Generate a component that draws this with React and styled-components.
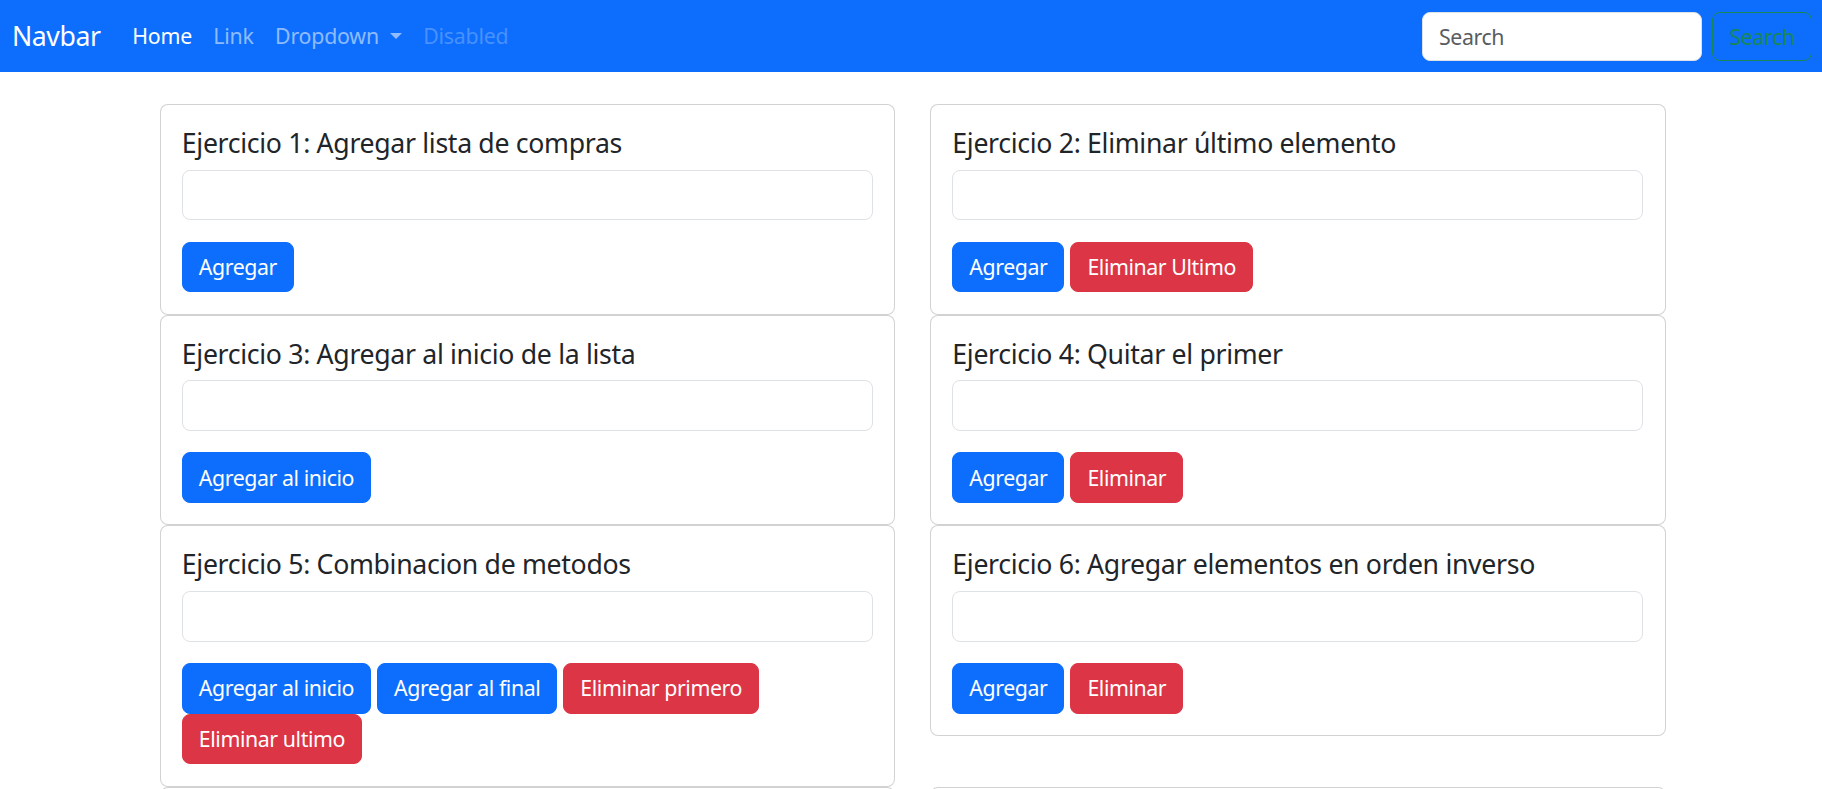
import React from 'react';
import styled, { createGlobalStyle, css } from 'styled-components';

const GlobalStyle = createGlobalStyle`
  html, body {
    margin: 0;
    padding: 0;
    background: #fff;
  }
  body {
    font-family: 'Noto Sans', 'Open Sans', sans-serif;
    font-size: 21.33px;
    line-height: 1.5;
    letter-spacing: -0.02em;
    color: #212529;
  }
  *, *::before, *::after {
    box-sizing: border-box;
  }
`;

const exercises = [
  {
    title: 'Ejercicio 1: Agregar lista de compras',
    buttons: [{ label: 'Agregar', variant: 'primary' }],
  },
  {
    title: 'Ejercicio 2: Eliminar último elemento',
    buttons: [
      { label: 'Agregar', variant: 'primary' },
      { label: 'Eliminar Ultimo', variant: 'danger' },
    ],
  },
  {
    title: 'Ejercicio 3: Agregar al inicio de la lista',
    buttons: [{ label: 'Agregar al inicio', variant: 'primary' }],
  },
  {
    title: 'Ejercicio 4: Quitar el primer',
    buttons: [
      { label: 'Agregar', variant: 'primary' },
      { label: 'Eliminar', variant: 'danger' },
    ],
  },
  {
    title: 'Ejercicio 5: Combinacion de metodos',
    buttons: [
      { label: 'Agregar al inicio', variant: 'primary' },
      { label: 'Agregar al final', variant: 'primary' },
      { label: 'Eliminar primero', variant: 'danger' },
      { label: 'Eliminar ultimo', variant: 'danger' },
    ],
  },
  {
    title: 'Ejercicio 6: Agregar elementos en orden inverso',
    buttons: [
      { label: 'Agregar', variant: 'primary' },
      { label: 'Eliminar', variant: 'danger' },
    ],
  },
  {
    title: 'Ejercicio 7: Buscar elemento',
    buttons: [{ label: 'Buscar', variant: 'primary' }],
  },
  {
    title: 'Ejercicio 8: Ordenar lista',
    buttons: [{ label: 'Ordenar', variant: 'primary' }],
  },
];

const App = () => {
  return (
    <>
      <GlobalStyle />
      <Navbar>
        <Brand href="#">Navbar</Brand>
        <NavList>
          <li>
            <NavLink href="#" $state="active">Home</NavLink>
          </li>
          <li>
            <NavLink href="#">Link</NavLink>
          </li>
          <li>
            <NavLink href="#">
              Dropdown
              <Caret />
            </NavLink>
          </li>
          <li>
            <NavLink $state="disabled">Disabled</NavLink>
          </li>
        </NavList>

        <SearchForm onSubmit={e => e.preventDefault()}>
          <SearchInput type="search" placeholder="Search" aria-label="Search" />
          <SearchButton type="submit">Search</SearchButton>
        </SearchForm>
      </Navbar>

      <Main>
        {exercises.map(ex => (
          <Card key={ex.title}>
            <CardTitle>{ex.title}</CardTitle>
            <TextInput type="text" />
            <ButtonRow>
              {ex.buttons.map(btn => (
                <Button key={btn.label} $variant={btn.variant}>
                  {btn.label}
                </Button>
              ))}
            </ButtonRow>
          </Card>
        ))}
      </Main>
    </>
  );
};

const Navbar = styled.nav`
  display: flex;
  align-items: center;
  height: 72px;
  padding: 0 10px 0 12px;
  background-color: #0d6efd;
`;

const Brand = styled.a`
  margin-right: 21px;
  font-size: 26.67px;
  line-height: 1.5;
  color: #fff;
  text-decoration: none;
`;

const NavList = styled.ul`
  display: flex;
  margin: 0;
  padding: 0;
  list-style: none;
`;

const linkColors = {
  active: '#fff',
  default: 'rgba(255, 255, 255, 0.55)',
  disabled: 'rgba(255, 255, 255, 0.25)',
};

const NavLink = styled.a`
  display: block;
  padding: 10.67px;
  font-size: 21.33px;
  letter-spacing: -0.01em;
  color: ${p => linkColors[p.$state || 'default']};
  text-decoration: none;
  cursor: ${p => (p.$state === 'disabled' ? 'default' : 'pointer')};
`;

const Caret = styled.span`
  display: inline-block;
  margin-left: 11px;
  vertical-align: 5.44px;
  border-top: 6.4px solid;
  border-right: 6.4px solid transparent;
  border-left: 6.4px solid transparent;
  border-bottom: 0;
`;

const SearchForm = styled.form`
  display: flex;
  gap: 10px;
  margin-left: auto;
`;

const controlBase = css`
  height: 49px;
  padding: 8px 16px;
  font-family: inherit;
  font-size: 21.33px;
  line-height: 1.5;
  letter-spacing: inherit;
  border-radius: 8px;
`;

const SearchInput = styled.input`
  ${controlBase};
  width: 280px;
  border: 1px solid #dee2e6;
  background: #fff;
  color: #212529;
  outline: none;

  &::placeholder {
    color: #595c5f;
  }
`;

const SearchButton = styled.button`
  ${controlBase};
  width: 100px;
  border: 1px solid #198754;
  background: transparent;
  color: #198754;
  cursor: pointer;
`;

const Main = styled.main`
  display: grid;
  grid-template-columns: 1fr 1fr;
  column-gap: 35px;
  align-items: start;
  max-width: 1509px;
  margin: 32px auto 0;
  padding-left: 3px;
`;

const Card = styled.div`
  padding: 22px 21.33px 21.33px;
  border: 1px solid rgba(0, 0, 0, 0.175);
  border-radius: 8px;
  background: #fff;
`;

const CardTitle = styled.h5`
  margin: 0 0 10.67px;
  font-size: 26.67px;
  font-weight: 400;
  line-height: 1.2;
  letter-spacing: -0.012em;
`;

const TextInput = styled.input`
  display: block;
  width: 100%;
  height: 50.67px;
  margin-bottom: 21.33px;
  padding: 8px 16px;
  font-family: inherit;
  font-size: 21.33px;
  border: 1px solid #dee2e6;
  border-radius: 8px;
  outline: none;
`;

const ButtonRow = styled.div`
  display: flex;
  flex-wrap: wrap;
  column-gap: 6px;
`;

const buttonColors = {
  primary: '#0d6efd',
  danger: '#dc3545',
};

const Button = styled.button`
  height: 50.67px;
  padding: 8px 16px;
  font-family: inherit;
  font-size: 21.33px;
  line-height: 1.5;
  letter-spacing: inherit;
  color: #fff;
  background-color: ${p => buttonColors[p.$variant]};
  border: 1px solid ${p => buttonColors[p.$variant]};
  border-radius: 8px;
  cursor: pointer;
`;

export default App;
